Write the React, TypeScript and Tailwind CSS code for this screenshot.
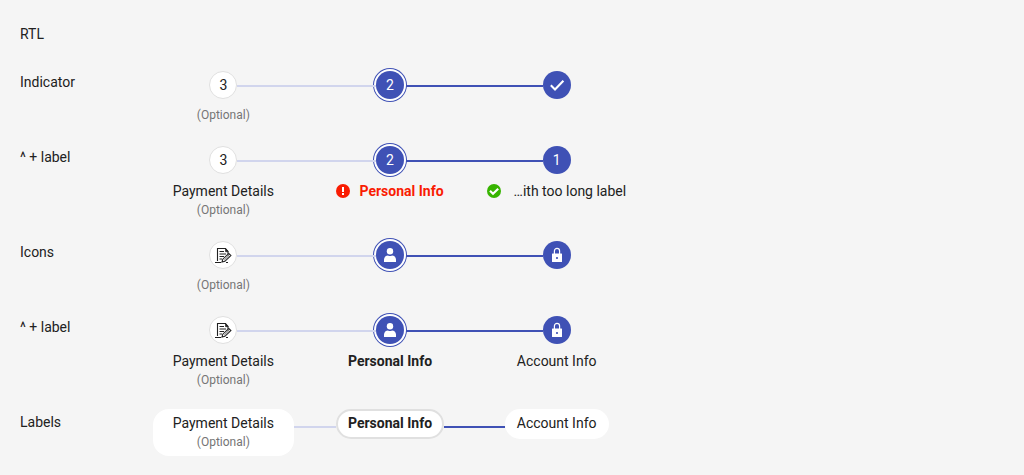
import type { ReactNode } from 'react';
import clsx from 'clsx';

type Line = 'none' | 'todo' | 'done';
type State = 'done' | 'active' | 'todo';

interface Step {
  name: string;
  state: State;
  indicator?: ReactNode;
  label?: string;
  status?: 'valid' | 'invalid';
  optional?: boolean;
}

const CheckIcon = () => (
  <svg viewBox="0 0 18 18" className="size-[18px]" fill="none" stroke="currentColor" aria-hidden="true">
    <path d="M2.800 9.300 7 13.400 15.400 4.800" strokeWidth="2.100" />
  </svg>
);

const UserIcon = () => (
  <svg viewBox="0 0 18 18" className="size-[18px]" fill="currentColor" aria-hidden="true">
    <circle cx="9" cy="5.2" r="3.2" />
    <path d="M3 16v-2.500C3 11 5 9.400 7 9.400c.6.5 1.300.7 2 .7s1.400-.2 2-.7c2 0 4 1.600 4 4.100V16z" />
  </svg>
);

const LockIcon = () => (
  <svg viewBox="0 0 18 18" className="size-[18px]" aria-hidden="true">
    <path d="M6.400 8V5a2.600 2.600 0 0 1 5.200 0v3" fill="none" stroke="currentColor" strokeWidth="1.200" />
    <path
      fillRule="evenodd"
      fill="currentColor"
      d="M4.500 7.500h9a.5.5 0 0 1 .5.5v7.500a.5.5 0 0 1-.5.5h-9a.5.5 0 0 1-.5-.5V8a.5.5 0 0 1 .5-.5zM9 10.900a1.100 1.100 0 1 0 0 2.200 1.100 1.100 0 0 0 0-2.200z"
    />
  </svg>
);

const FormIcon = () => (
  <svg viewBox="0 0 18 18" className="size-[18px]" fill="none" stroke="currentColor" aria-hidden="true">
    <path d="M3.500 15V2.500h8l2.500 3V8" strokeWidth="1.100" />
    <path d="M11.500 2.500v3.200h2.700z" fill="currentColor" strokeWidth=".6" />
    <path d="M5.500 5.500h4.500M5.500 8h6.500M5.500 10.500h4.500M5.500 13h2.500M1 16.500h6M12 16.500h2" strokeWidth="1" />
    <path d="m8 16 .8-2.800 6-5.700 2.100 2.100-6 5.700z" fill="white" strokeWidth="1.100" />
    <path d="m13.500 8.800 2.100 2.100M10.300 14l4-3.800" strokeWidth=".7" />
  </svg>
);

const StatusIcon = ({ status }: { status: 'valid' | 'invalid' }) => (
  <svg
    viewBox="0 0 14 14"
    role="img"
    aria-label={status}
    className={clsx('size-[14px] shrink-0', status === 'valid' ? 'text-[#37b400]' : 'text-[#f91c02]')}
  >
    <circle cx="7" cy="7" r="7" fill="currentColor" />
    {status === 'valid' ? (
      <path d="m3 6.800 3 2.900 5.200-5" fill="none" stroke="white" strokeWidth="2.200" />
    ) : (
      <path d="M7 3v5M7 9v2" fill="none" stroke="white" strokeWidth="2" />
    )}
  </svg>
);

function Connector({ line, className }: { line: Line; className?: string }) {
  return (
    <span
      className={clsx(
        'h-0.5 flex-1',
        line === 'todo' && 'bg-[#d1d5ed]',
        line === 'done' && 'bg-[#3f51b5]',
        className,
      )}
    />
  );
}

function Label({ step }: { step: Step }) {
  return (
    <span
      dir="ltr"
      className={clsx(
        'flex h-5 items-center leading-5 whitespace-nowrap',
        step.status === 'valid' ? 'w-[139px] justify-between' : 'justify-center gap-[9px]',
        step.state === 'active' && 'font-bold',
        step.status === 'invalid' && 'text-[#f91c02]',
      )}
    >
      {step.status && <StatusIcon status={step.status} />}
      <span>{step.label}</span>
    </span>
  );
}

const Optional = () => (
  <span dir="ltr" className="mt-px block text-center text-xs leading-4 text-[#757575]">
    (Optional)
  </span>
);

function StepItem({ step, before, after }: { step: Step; before: Line; after: Line }) {
  const current = step.state === 'active' ? 'step' : undefined;

  if (!step.indicator) {
    return (
      <li className="flex items-start pt-px">
        <Connector line={before} className="mt-[17px]" />
        <button
          type="button"
          aria-current={current}
          className={clsx(
            'flex flex-col items-center rounded-2xl bg-white',
            step.state === 'active' ? 'border-2 border-[#e0e0e0] px-[10px] pt-0.5 pb-1' : 'pt-1 pb-1.5',
            step.state === 'done' && 'px-3',
            step.state === 'todo' && 'px-5',
          )}
        >
          <Label step={step} />
          {step.optional && <Optional />}
        </button>
        <Connector line={after} className="mt-[17px]" />
      </li>
    );
  }

  return (
    <li>
      <button type="button" aria-current={current} aria-label={step.name} className="flex w-full flex-col">
        <span className="flex h-[34px] w-full items-center">
          <Connector line={before} className="mt-0.5" />
          <span
            className={clsx(
              'flex size-7 items-center justify-center rounded-full',
              step.state === 'todo' ? 'border border-[#e0e0e0] bg-white' : 'bg-[#3f51b5] text-white',
              step.state === 'active' && 'shadow-[0_0_0_2px_#fff,0_0_0_3px_#3f51b5]',
            )}
          >
            {step.indicator}
          </span>
          <Connector line={after} className="mt-0.5" />
        </span>
        <span className="flex w-full flex-col items-center pt-1">
          {step.label && <Label step={step} />}
          {step.optional && <Optional />}
        </span>
      </button>
    </li>
  );
}

function Stepper({ title, steps }: { title: string; steps: Step[] }) {
  return (
    <section className="flex items-start">
      <h2 className="w-[120px] shrink-0 leading-7">{title}</h2>
      <ol dir="rtl" aria-label={title} className="grid w-full max-w-[500px] grid-cols-3">
        {steps.map((step, i) => (
          <StepItem
            key={step.name}
            step={step}
            before={i === 0 ? 'none' : step.state === 'todo' ? 'todo' : 'done'}
            after={i === steps.length - 1 ? 'none' : steps[i + 1].state === 'todo' ? 'todo' : 'done'}
          />
        ))}
      </ol>
    </section>
  );
}

const account: Step = { name: 'Account Info', state: 'done' };
const personal: Step = { name: 'Personal Info', state: 'active' };
const payment: Step = { name: 'Payment Details', state: 'todo', optional: true };

const rows: { title: string; steps: Step[] }[] = [
  {
    title: 'Indicator',
    steps: [
      { ...account, indicator: <CheckIcon /> },
      { ...personal, indicator: '2' },
      { ...payment, indicator: '3' },
    ],
  },
  {
    title: '^ + label',
    steps: [
      { ...account, indicator: '1', label: '…ith too long label', status: 'valid' },
      { ...personal, indicator: '2', label: 'Personal Info', status: 'invalid' },
      { ...payment, indicator: '3', label: 'Payment Details' },
    ],
  },
  {
    title: 'Icons',
    steps: [
      { ...account, indicator: <LockIcon /> },
      { ...personal, indicator: <UserIcon /> },
      { ...payment, indicator: <FormIcon /> },
    ],
  },
  {
    title: '^ + label',
    steps: [
      { ...account, indicator: <LockIcon />, label: 'Account Info' },
      { ...personal, indicator: <UserIcon />, label: 'Personal Info' },
      { ...payment, indicator: <FormIcon />, label: 'Payment Details' },
    ],
  },
  {
    title: 'Labels',
    steps: [
      { ...account, label: 'Account Info' },
      { ...personal, label: 'Personal Info' },
      { ...payment, label: 'Payment Details' },
    ],
  },
];

export default function App() {
  return (
    <main className="flex min-h-screen flex-col gap-5 bg-[#f5f5f5] px-5 pt-5 font-['Roboto',sans-serif] text-sm text-[#212121]">
      <h1 className="leading-7">RTL</h1>
      {rows.map((row, i) => (
        <Stepper key={i} title={row.title} steps={row.steps} />
      ))}
    </main>
  );
}
